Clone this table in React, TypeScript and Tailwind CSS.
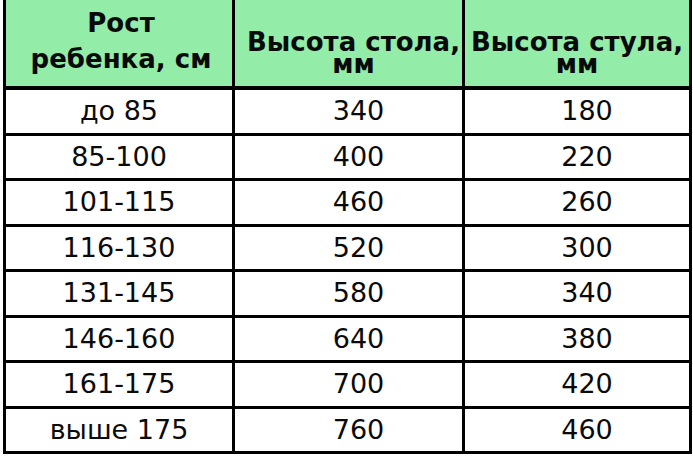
import React from "react";

const rows: [string, string, string][] = [
  ["до 85", "340", "180"],
  ["85-100", "400", "220"],
  ["101-115", "460", "260"],
  ["116-130", "520", "300"],
  ["131-145", "580", "340"],
  ["146-160", "640", "380"],
  ["161-175", "700", "420"],
  ["выше 175", "760", "460"],
];

export default function App() {
  return (
    <div
      className="w-[693px] h-[459px] bg-white overflow-hidden pl-[3px]"
      style={{ fontFamily: '"DejaVu Sans", "Noto Sans", sans-serif' }}
    >
      <div className="w-[689px] border-l-[3px] border-r-[3px] border-black text-[#0a0a0a]">
        <div className="grid grid-cols-[229px_230px_224px] h-[90px] border-b-4 border-black bg-[#93eca8] font-bold text-[26px]">
          <div className="border-r-[3px] border-black flex flex-col items-center pt-[5px] leading-[36px] pl-[4px]">
            <span>Рост</span>
            <span>ребенка, см</span>
          </div>
          <div className="border-r-[3px] border-black flex flex-col items-center pt-[31px] leading-[22px] pl-[10px] whitespace-nowrap">
            <span>Высота стола,</span>
            <span>мм</span>
          </div>
          <div className="flex flex-col items-center pt-[31px] leading-[22px] whitespace-nowrap">
            <span>Высота стула,</span>
            <span>мм</span>
          </div>
        </div>
        {rows.map((r, i) => (
          <div
            key={i}
            className="grid grid-cols-[229px_230px_224px] h-[45.5px] border-b-[3px] border-black text-[27px]"
          >
            <div className="border-r-[3px] border-black flex items-center justify-center">
              {r[0]}
            </div>
            <div className="border-r-[3px] border-black flex items-center justify-center pl-[20px]">
              {r[1]}
            </div>
            <div className="flex items-center justify-center pl-[20px]">{r[2]}</div>
          </div>
        ))}
      </div>
    </div>
  );
}
